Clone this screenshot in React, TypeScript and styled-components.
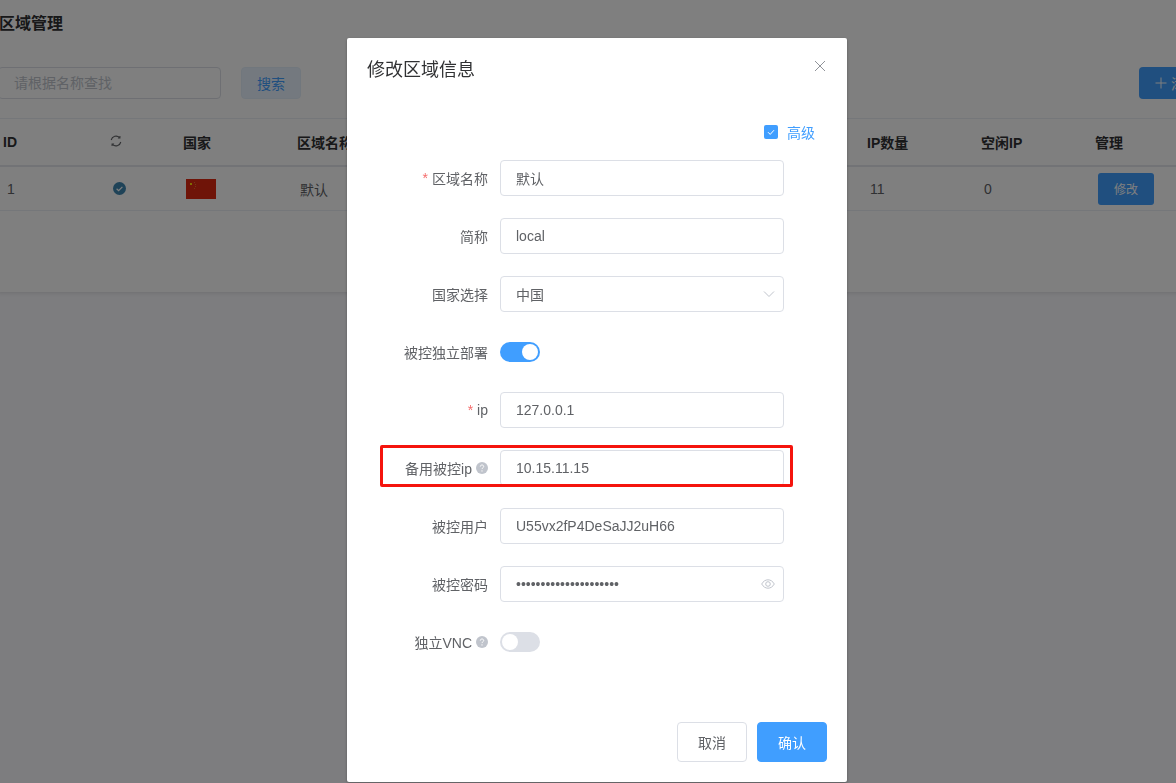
import React from "react";
import styled, { createGlobalStyle } from "styled-components";

const Global = createGlobalStyle`
  html, body { margin: 0; padding: 0; width: 100%; height: 100%; overflow: hidden; background: #fafafe; }
  body { font-family: "Liberation Sans", "Noto Sans CJK SC", sans-serif; font-size: 14px; color: #606266; }
  * { box-sizing: border-box; }
`;

const Page = styled.div`
  width: 1300px;
  margin-left: -2px;
`;
const Card = styled.section`
  height: 292px;
  background: #fff;
  box-shadow: 0 1px 4px rgba(0, 0, 0, 0.12);
`;
const Title = styled.h1`
  margin: 0;
  height: 67px;
  padding: 13px 0 0 1px;
  font-size: 16px;
  line-height: 22px;
  font-weight: 700;
  color: #303133;
`;
const Toolbar = styled.div`
  display: flex;
  align-items: center;
  width: 1239px;
  height: 32px;
  margin-bottom: 19px;
`;
const SearchInput = styled.div`
  width: 223px;
  height: 32px;
  padding-left: 15px;
  border: 1px solid #dcdfe6;
  border-radius: 4px;
  line-height: 30px;
  color: #c0c4cc;
`;
const SearchButton = styled.button`
  width: 60px;
  height: 32px;
  margin-left: 20px;
  padding: 0;
  border: 1px solid #e3effb;
  border-radius: 4px;
  background: #e9f3ff;
  font: inherit;
  font-size: 14px;
  color: #409eff;
`;
const AddButton = styled.button`
  display: flex;
  align-items: center;
  gap: 4px;
  width: 98px;
  height: 32px;
  margin-left: auto;
  padding: 0 0 0 16px;
  border: 0;
  border-radius: 4px;
  background: #409eff;
  font: inherit;
  font-size: 14px;
  color: #fff;
`;
const Grid = styled.div<{ $h: number; $line: string }>`
  display: grid;
  grid-template-columns: 102px 73px 114px 114px 114px 114px 114px 114px 114px 114px 114px;
  align-items: center;
  height: ${(p) => p.$h}px;
  border-bottom: ${(p) => p.$line};
`;
const HeadCell = styled.div`
  padding-left: 10px;
  font-weight: 700;
  color: #303133;
  white-space: nowrap;
  overflow: hidden;
  &:first-child { padding-left: 5px; }
`;
const Cell = styled.div`
  display: flex;
  align-items: center;
  padding-left: 13px;
  color: #606266;
  &:first-child { padding-left: 9px; }
`;
const TableHead = styled.div`
  border-top: 1px solid #ebeef5;
`;
const EditButton = styled.button`
  width: 56px;
  height: 32px;
  padding: 0;
  border: 0;
  border-radius: 3px;
  background: #409eff;
  font: inherit;
  font-size: 12px;
  color: #fff;
`;

const Mask = styled.div`
  position: fixed;
  inset: 0;
  background: rgba(0, 0, 0, 0.5);
`;
const Dialog = styled.div`
  position: absolute;
  top: 38px;
  left: 347px;
  width: 500px;
  height: 744px;
  display: flex;
  flex-direction: column;
  background: #fff;
  border-radius: 2px;
  box-shadow: 0 1px 3px rgba(0, 0, 0, 0.3);
`;
const DialogHeader = styled.header`
  display: flex;
  justify-content: space-between;
  padding: 20px 21px 0 20px;
  height: 76px;
`;
const DialogTitle = styled.h2`
  margin: 0;
  font-size: 18px;
  font-weight: 400;
  line-height: 24px;
  color: #303133;
`;
const CloseButton = styled.span`
  display: flex;
  margin-top: 2px;
  width: 12px;
  height: 12px;
  color: #909399;
`;
const Advanced = styled.div`
  display: flex;
  align-items: center;
  justify-content: flex-end;
  gap: 9px;
  height: 36px;
  padding-right: 32px;
  margin-bottom: 10px;
  color: #409eff;
`;
const CheckBox = styled.span`
  display: flex;
  align-items: center;
  justify-content: center;
  width: 14px;
  height: 14px;
  border-radius: 2px;
  background: #409eff;
`;
const Form = styled.div`
  flex: 1;
  display: flex;
  flex-direction: column;
  gap: 22px;
`;
const Item = styled.div`
  position: relative;
  display: flex;
  align-items: center;
  height: 36px;
`;
const Label = styled.label`
  display: flex;
  align-items: center;
  justify-content: flex-end;
  gap: 4px;
  width: 153px;
  padding-right: 12px;
  margin-right: 0;
  color: #606266;
  white-space: nowrap;
`;
const Required = styled.span`
  color: #f56c6c;
`;
const Control = styled.div`
  display: flex;
  align-items: center;
  justify-content: space-between;
  width: 284px;
  height: 36px;
  padding: 0 8px 0 15px;
  border: 1px solid #dcdfe6;
  border-radius: 4px;
  color: #606266;
  white-space: nowrap;
`;
const Dots = styled.span`
  font-size: 14px;
  letter-spacing: 0;
`;
const Help = styled.span`
  display: flex;
`;
const Switch = styled.span<{ $on?: boolean }>`
  position: relative;
  display: block;
  width: 40px;
  height: 20px;
  border-radius: 10px;
  background: ${(p) => (p.$on ? "#409eff" : "#dcdfe6")};
  &::after {
    content: "";
    position: absolute;
    top: 2px;
    left: ${(p) => (p.$on ? "22px" : "2px")};
    width: 16px;
    height: 16px;
    border-radius: 50%;
    background: #fff;
  }
`;
const Highlight = styled.div`
  position: absolute;
  top: -5px;
  left: 33px;
  width: 413px;
  height: 42px;
  border: 3px solid #f5140d;
  border-radius: 2px;
  pointer-events: none;
`;
const Footer = styled.footer`
  display: flex;
  justify-content: flex-end;
  gap: 10px;
  padding: 0 20px 20px 0;
`;
const FooterButton = styled.button<{ $primary?: boolean }>`
  width: 70px;
  height: 40px;
  padding: 0;
  border: 1px solid ${(p) => (p.$primary ? "#409eff" : "#dcdfe6")};
  border-radius: 4px;
  background: ${(p) => (p.$primary ? "#409eff" : "#fff")};
  font: inherit;
  font-size: 14px;
  color: ${(p) => (p.$primary ? "#fff" : "#606266")};
`;

const HelpIcon = () => (
  <Help>
    <svg width="12" height="12" viewBox="0 0 12 12">
      <circle cx="6" cy="6" r="6" fill="#c0c4cc" />
      <path d="M4.3 4.6C4.3 3.6 5 3 6 3s1.7.6 1.7 1.5c0 1.3-1.7 1.3-1.7 2.6" fill="none" stroke="#fff" strokeWidth="1" />
      <circle cx="6" cy="8.9" r=".65" fill="#fff" />
    </svg>
  </Help>
);

const SyncIcon = () => (
  <svg width="12" height="12" viewBox="0 0 12 12" fill="none" stroke="#606266" strokeWidth="1.1">
    <path d="M1.2 5A5 5 0 0 1 9.6 2.6" />
    <path d="M10.8 7A5 5 0 0 1 2.4 9.4" />
    <path d="M9.9 0.9V3H7.9" />
    <path d="M2.1 11.1V9H4.1" />
  </svg>
);

const StatusIcon = () => (
  <svg width="13" height="13" viewBox="0 0 13 13">
    <circle cx="6.5" cy="6.5" r="6.5" fill="#3f86b0" />
    <path d="M3.6 6.7l2 1.9 3.8-3.8" fill="none" stroke="#fff" strokeWidth="1.2" />
  </svg>
);

const Flag = () => (
  <svg width="30" height="20" viewBox="0 0 30 20">
    <rect width="30" height="20" fill="#de2910" />
    <rect x="4" y="4" width="2" height="2" fill="#ffde00" />
    <rect x="8" y="3" width="1" height="1" fill="#e9702a" />
    <rect x="9" y="5" width="1" height="1" fill="#e9702a" />
    <rect x="9" y="7" width="1" height="1" fill="#e9702a" />
    <rect x="8" y="9" width="1" height="1" fill="#e9702a" />
  </svg>
);

const Chevron = () => (
  <svg width="12" height="8" viewBox="0 0 12 8" fill="none" stroke="#c0c4cc" strokeWidth="1">
    <path d="M1 1.5l5 5 5-5" />
  </svg>
);

const Eye = () => (
  <svg width="14" height="10" viewBox="0 0 14 10" fill="none" stroke="#c0c4cc" strokeWidth="1">
    <path d="M.7 5C2.3 2.2 4.5.8 7 .8s4.700 1.400 6.300 4.200C11.700 7.800 9.500 9.200 7 9.200S2.300 7.800.7 5z" />
    <circle cx="7" cy="5" r="2.300" />
  </svg>
);

const heads = ["ID", "", "国家", "区域名称", "", "", "", "", "IP数量", "空闲IP", "管理"];

export default function App() {
  return (
    <>
      <Global />
      <Page>
        <Card>
          <Title>区域管理</Title>
          <Toolbar>
            <SearchInput>请根据名称查找</SearchInput>
            <SearchButton>搜索</SearchButton>
            <AddButton>
              <svg width="12" height="12" viewBox="0 0 12 12" stroke="#fff" strokeWidth="1">
                <path d="M6 .5v11M.5 6h11" />
              </svg>
              添加
            </AddButton>
          </Toolbar>
          <TableHead>
            <Grid $h={48} $line="2px solid #e4e7ed">
              {heads.map((h, i) => (
                <HeadCell key={i}>{i === 1 ? <SyncIcon /> : h}</HeadCell>
              ))}
            </Grid>
          </TableHead>
          <Grid $h={44} $line="1px solid #ebeef5">
            <Cell>1</Cell>
            <Cell><StatusIcon /></Cell>
            <Cell><Flag /></Cell>
            <Cell>默认</Cell>
            <Cell />
            <Cell />
            <Cell />
            <Cell />
            <Cell>11</Cell>
            <Cell>0</Cell>
            <Cell><EditButton>修改</EditButton></Cell>
          </Grid>
        </Card>
      </Page>
      <Mask>
        <Dialog>
          <DialogHeader>
            <DialogTitle>修改区域信息</DialogTitle>
            <CloseButton>
              <svg width="12" height="12" viewBox="0 0 12 12" stroke="currentColor" strokeWidth="1">
                <path d="M1 1l10 10M11 1L1 11" />
              </svg>
            </CloseButton>
          </DialogHeader>
          <Advanced>
            <CheckBox>
              <svg width="10" height="10" viewBox="0 0 10 10" fill="none" stroke="#fff" strokeWidth="1">
                <path d="M2 5.200l2.200 2.200L8 3.200" />
              </svg>
            </CheckBox>
            高级
          </Advanced>
          <Form>
            <Item>
              <Label><Required>*</Required>区域名称</Label>
              <Control>默认</Control>
            </Item>
            <Item>
              <Label>简称</Label>
              <Control>local</Control>
            </Item>
            <Item>
              <Label>国家选择</Label>
              <Control>中国<Chevron /></Control>
            </Item>
            <Item>
              <Label>被控独立部署</Label>
              <Switch $on />
            </Item>
            <Item>
              <Label><Required>*</Required>ip</Label>
              <Control>127.0.0.1</Control>
            </Item>
            <Item>
              <Label>备用被控ip<HelpIcon /></Label>
              <Control>10.15.11.15</Control>
              <Highlight />
            </Item>
            <Item>
              <Label>被控用户</Label>
              <Control>U55vx2fP4DeSaJJ2uH66</Control>
            </Item>
            <Item>
              <Label>被控密码</Label>
              <Control><Dots>•••••••••••••••••••••</Dots><Eye /></Control>
            </Item>
            <Item>
              <Label>独立VNC<HelpIcon /></Label>
              <Switch />
            </Item>
          </Form>
          <Footer>
            <FooterButton>取消</FooterButton>
            <FooterButton $primary>确认</FooterButton>
          </Footer>
        </Dialog>
      </Mask>
    </>
  );
}
